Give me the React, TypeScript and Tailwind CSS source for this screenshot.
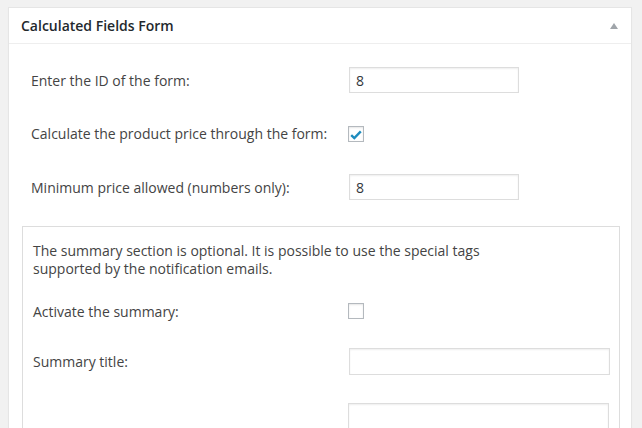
import React from "react";

const font = { fontFamily: '"Open Sans", "Noto Sans", sans-serif' };

function TextInput({ value, className }: { value?: string; className?: string }) {
  return (
    <div
      className={`h-[26px] border border-[#dddddd] bg-white shadow-[inset_0_1px_2px_rgba(0,0,0,0.07)] px-[6px] flex items-center text-[14px] text-[#32373c] ${className ?? ""}`}
    >
      {value}
    </div>
  );
}

function Checkbox({ checked }: { checked?: boolean }) {
  return (
    <div className="w-[16px] h-[16px] border border-[#b4b9be] bg-white shadow-[inset_0_1px_2px_rgba(0,0,0,0.1)] flex items-center justify-center">
      {checked && (
        <svg width="12" height="10" viewBox="0 0 12 10" className="mt-[2px]">
          <path d="M1.2 5.2 L4.3 8.1 L10.8 1.4" fill="none" stroke="#1e8cbe" strokeWidth="2.4" strokeLinejoin="miter" />
        </svg>
      )}
    </div>
  );
}

function Row({ label, height, labelWidth, children }: { label: string; height: string; labelWidth: string; children: React.ReactNode }) {
  return (
    <div className={`flex items-center ${height}`}>
      <div className={`${labelWidth} shrink-0 text-[14px] text-[#444444]`}>{label}</div>
      {children}
    </div>
  );
}

export default function App() {
  return (
    <div className="w-[642px] h-[428px] overflow-hidden bg-[#f1f1f1] pt-[7px] pl-[8px]" style={font}>
      <div className="w-[624px] h-[430px] bg-white border border-[#e5e5e5] shadow-[0_1px_1px_rgba(0,0,0,0.04)]">
        <div className="h-[36px] border-b border-[#eeeeee] flex items-center justify-between pl-[12px] pr-[13px]">
          <h2 className="text-[14px] font-semibold text-[#23282d]">Calculated Fields Form</h2>
          <svg width="8" height="6" viewBox="0 0 8 6">
            <path d="M4 0 L8 6 L0 6 Z" fill="#a0a5aa" />
          </svg>
        </div>
        <div className="pt-[8px] pl-[22px] pr-[12px]">
          <Row label="Enter the ID of the form:" height="h-[56px]" labelWidth="w-[318px]">
            <TextInput value="8" className="w-[170px]" />
          </Row>
          <Row label="Calculate the product price through the form:" height="h-[51px]" labelWidth="w-[317px]">
            <Checkbox checked />
          </Row>
          <Row label="Minimum price allowed (numbers only):" height="h-[56px]" labelWidth="w-[318px]">
            <TextInput value="8" className="w-[170px]" />
          </Row>
        </div>
        <div className="mt-[11px] ml-[13px] w-[598px] h-[220px] border border-[#dddddd] pt-[15px] pl-[10px]">
          <p className="text-[14px] leading-[18px] text-[#444444]">
            The summary section is optional. It is possible to use the special tags
            <br />
            supported by the notification emails.
          </p>
          <div className="mt-[8px]">
            <Row label="Activate the summary:" height="h-[50px]" labelWidth="w-[315px]">
              <Checkbox />
            </Row>
            <Row label="Summary title:" height="h-[50px]" labelWidth="w-[316px]">
              <TextInput className="w-[261px] h-[27px]" />
            </Row>
            <div className="flex pt-[17px]">
              <div className="w-[315px] shrink-0" />
              <div className="w-[261px] h-[60px] border border-[#dddddd] shadow-[inset_0_1px_2px_rgba(0,0,0,0.07)]" />
            </div>
          </div>
        </div>
      </div>
    </div>
  );
}
